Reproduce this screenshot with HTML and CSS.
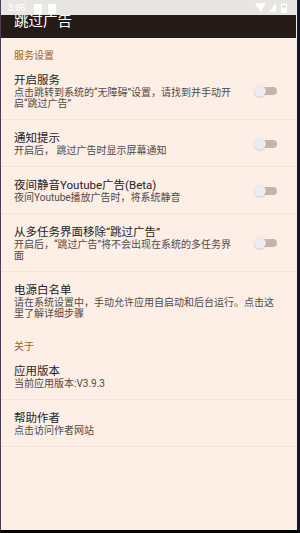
FILE: index.html
```html
<!DOCTYPE html>
<html lang="zh-CN">
<head>
<meta charset="utf-8">
<title>跳过广告</title>
<link rel="stylesheet" href="styles.css">
</head>
<body>
<div class="frame">
  <div class="screen">
    <div class="statusbar">
      <div class="status-left">
        <span class="time">3:05</span>
        <span class="notif"></span>
        <span class="notif"></span>
      </div>
      <div class="status-right">
        <svg width="11" height="9" viewBox="0 0 11 9"><path d="M0 0H11L5.5 9Z" fill="#fff"/></svg>
        <svg width="7" height="9" viewBox="0 0 7 9"><path d="M7 0V9H0Z" fill="#fff"/></svg>
        <svg width="6" height="10" viewBox="0 0 6 10"><rect x="2" y="0" width="2" height="1" fill="#fff"/><rect x="0.5" y="1.5" width="5" height="8" fill="none" stroke="#fff"/><rect x="1" y="5" width="4" height="4.5" fill="#fff"/></svg>
      </div>
    </div>
    <div class="toolbar"><span class="toolbar-title">跳过广告</span></div>
    <div class="content">
      <div class="category">服务设置</div>
      <div class="pref divided">
        <div class="pref-text">
          <div class="pref-title">开启服务</div>
          <div class="pref-desc">点击跳转到系统的“无障碍”设置，请找到并手动开启“跳过广告”</div>
        </div>
        <div class="toggle"><span class="thumb"></span></div>
      </div>
      <div class="pref divided">
        <div class="pref-text">
          <div class="pref-title">通知提示</div>
          <div class="pref-desc">开启后， 跳过广告时显示屏幕通知</div>
        </div>
        <div class="toggle"><span class="thumb"></span></div>
      </div>
      <div class="pref divided">
        <div class="pref-text">
          <div class="pref-title">夜间静音Youtube广告(Beta)</div>
          <div class="pref-desc">夜间Youtube播放广告时，将系统静音</div>
        </div>
        <div class="toggle"><span class="thumb"></span></div>
      </div>
      <div class="pref divided">
        <div class="pref-text">
          <div class="pref-title">从多任务界面移除“跳过广告”</div>
          <div class="pref-desc">开启后，“跳过广告”将不会出现在系统的多任务界面</div>
        </div>
        <div class="toggle"><span class="thumb"></span></div>
      </div>
      <div class="pref">
        <div class="pref-text">
          <div class="pref-title">电源白名单</div>
          <div class="pref-desc">请在系统设置中，手动允许应用自启动和后台运行。点击这里了解详细步骤</div>
        </div>
      </div>
      <div class="category category-next">关于</div>
      <div class="pref divided">
        <div class="pref-text">
          <div class="pref-title">应用版本</div>
          <div class="pref-desc">当前应用版本:V3.9.3</div>
        </div>
      </div>
      <div class="pref divided">
        <div class="pref-text">
          <div class="pref-title">帮助作者</div>
          <div class="pref-desc">点击访问作者网站</div>
        </div>
      </div>
    </div>
  </div>
  <div class="edge"></div>
</div>
</body>
</html>
```
FILE: styles.css
```css
html, body {
  margin: 0;
  padding: 0;
  background: #050505;
}
body {
  width: 300px;
  height: 533px;
  overflow: hidden;
  font-family: Roboto, "Noto Sans CJK SC", sans-serif;
}
.frame {
  display: flex;
  height: 530px;
}
.screen {
  width: 295px;
  height: 530px;
  background: #fdeee6;
  border-left: 1px solid #4a3e58;
  display: flex;
  flex-direction: column;
  overflow: hidden;
}
.edge {
  width: 4px;
  background: #16172a;
  border-left: 1px solid #f4ece8;
  box-sizing: border-box;
}
.statusbar {
  height: 15px;
  background: #e7e6e5;
  display: flex;
  justify-content: space-between;
  align-items: center;
  padding: 0 9px 0 7px;
  flex-shrink: 0;
}
.status-left {
  display: flex;
  align-items: center;
  gap: 6px;
}
.time {
  color: #fff;
  font-size: 9px;
  font-weight: 500;
  line-height: 10px;
  margin-right: 2px;
}
.notif {
  width: 8px;
  height: 10px;
  background: #fff;
  margin-top: 2px;
}
.status-right {
  display: flex;
  align-items: center;
  gap: 3px;
}
.status-right svg:last-child {
  margin-left: 2px;
}
.toolbar {
  height: 23px;
  background: #241b16;
  padding-left: 13px;
  flex-shrink: 0;
  overflow: hidden;
}
.toolbar-title {
  display: block;
  color: #fff;
  font-size: 14.5px;
  line-height: 14px;
}
.content {
  flex: 1;
}
.category {
  font-size: 10px;
  line-height: 12px;
  color: #a2612a;
  padding: 12px 13px 0;
}
.category-next {
  padding-top: 11px;
}
.pref {
  display: flex;
  align-items: center;
  padding: 11.5px 16px 11.5px 13px;
}
.pref.divided {
  border-bottom: 1px solid #f5e2d9;
  padding-bottom: 10.5px;
}
.pref-text {
  flex: 1;
  min-width: 0;
}
.pref-title {
  font-size: 11.5px;
  line-height: 13px;
  color: #232323;
}
.pref-desc {
  font-size: 10px;
  line-height: 11px;
  color: #4e4a48;
}
.toggle {
  position: relative;
  width: 23px;
  height: 12px;
  margin-left: 18px;
  margin-right: 3px;
  flex-shrink: 0;
}
.toggle::before {
  content: "";
  position: absolute;
  left: 3px;
  right: 0;
  top: 2px;
  height: 8px;
  border-radius: 4px;
  background: #c7b3a9;
}
.thumb {
  position: absolute;
  left: 0;
  top: 0;
  width: 12px;
  height: 12px;
  border-radius: 50%;
  background: #ececec;
  box-shadow: 0 0.5px 1px rgba(0,0,0,0.25);
}
```
